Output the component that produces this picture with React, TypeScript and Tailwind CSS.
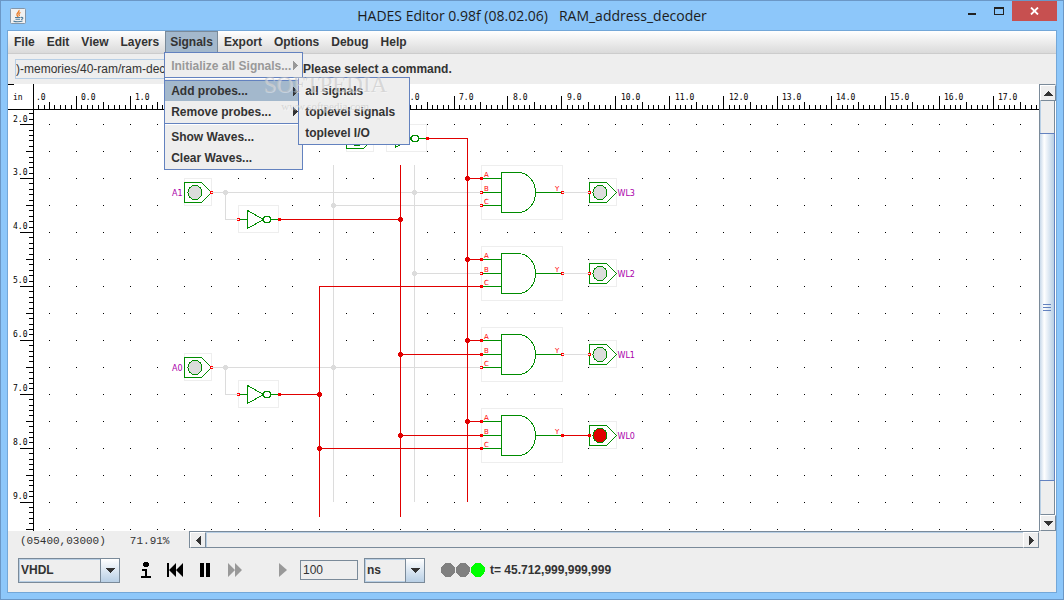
import { ReactNode, useLayoutEffect, useRef, useState } from "react";

const GREEN = "#008c00";
const HIGH = "#e00000";
const LOW = "#dcdcdc";
const PIN = "#ff0000";

// one ruler unit at 71.91% zoom
const UNIT = 53.93;
const ORIGIN_X = 76.4;
const ORIGIN_Y = 16.7;

const menus = ["File", "Edit", "View", "Layers", "Signals", "Export", "Options", "Debug", "Help"];

function range(from: number, to: number) {
  return Array.from({ length: to - from + 1 }, (_, i) => from + i);
}

interface SizeProps {
  width: number;
  height: number;
}

function Ruler({ width, height }: SizeProps) {
  // last unit whose label still fits completely
  const lastX = Math.floor((width + 8 - 25 - ORIGIN_X) / UNIT);
  const lastY = Math.floor((height + 84 - ORIGIN_Y) / UNIT);
  return (
    <g>
      <rect x={8} y={84} width={width} height={25} fill="#fff" />
      <rect x={8} y={84} width={25} height={height} fill="#fff" />
      {range(-7, lastX * 10 + 12).map((i) => {
        const x = Math.round(ORIGIN_X - 0.4 + (i * UNIT) / 10);
        const top = i % 10 === 0 ? 96 : i % 5 === 0 ? 102 : 105;
        return <rect key={i} x={x} y={top} width={1} height={109 - top} />;
      })}
      <text x={36} y={100}>.0</text>
      {range(0, lastX).map((i) => (
        <text key={i} x={Math.round(ORIGIN_X + i * UNIT) + 5} y={100}>
          {i + ".0"}
        </text>
      ))}
      {range(18, lastY * 10 + 12).map((i) => {
        const y = Math.round(ORIGIN_Y - 0.4 + (i * UNIT) / 10);
        const left = i % 10 === 0 ? 20 : i % 5 === 0 ? 26 : 29;
        return <rect key={i} x={left} y={y} width={33 - left} height={1} />;
      })}
      {range(2, lastY).map((i) => (
        <text key={i} x={13} y={Math.round(ORIGIN_Y + i * UNIT) - 3}>
          {i + ".0"}
        </text>
      ))}
      <rect x={8} y={84} width={6} height={1} />
      <rect x={8} y={109} width={width} height={1} />
      <rect x={33} y={84} width={1} height={height} />
      <text x={13} y={100}>in</text>
    </g>
  );
}

function GridDots({ width, height }: SizeProps) {
  const rows = Math.ceil(((height + 84) * 2) / UNIT);
  const cols = Math.ceil((width * 2) / UNIT);
  return (
    <g>
      {range(4, rows).map((row) =>
        range(-1, cols).map((col) => (
          <rect
            key={row + ":" + col}
            x={Math.round(ORIGIN_X - 0.4 + (col * UNIT) / 2)}
            y={Math.round(ORIGIN_Y - 0.4 + (row * UNIT) / 2)}
            width={1}
            height={1}
          />
        ))
      )}
    </g>
  );
}

function Pin({ x, y, on }: { x: number; y: number; on?: boolean }) {
  return <rect x={x - 1} y={y - 1} width={2} height={2} fill={on ? PIN : "#fff"} stroke={PIN} />;
}

function Frame({ x, y, w, h }: { x: number; y: number; w: number; h: number }) {
  return <rect x={x} y={y} width={w} height={h} fill="#fff" stroke="#eeeeee" />;
}

interface PortProps {
  x: number;
  y: number;
  label: string;
  output?: boolean;
  on?: boolean;
}

function Port({ x, y, label, output, on }: PortProps) {
  return (
    <g>
      <Frame x={x} y={y - 14} w={27} h={27} />
      <path
        d={`M${x} ${y - 10}H${x + 17}L${x + 27} ${y}L${x + 17} ${y + 10}H${x}Z`}
        fill="none"
        stroke={GREEN}
      />
      <circle cx={x + 10.5} cy={y} r={7} fill={on ? HIGH : LOW} stroke={GREEN} />
      <Pin x={output ? x : x + 27} y={y} on={on} />
      <text x={output ? x + 28 : x - 2} y={y + 3} fill="#aa00aa" textAnchor={output ? "start" : "end"}>
        {label}
      </text>
    </g>
  );
}

function Inverter({ x, y }: { x: number; y: number }) {
  return (
    <g>
      <Frame x={x} y={y - 14} w={40} h={27} />
      <path
        d={`M${x} ${y}H${x + 9}M${x + 9} ${y - 9}V${y + 9}L${x + 25} ${y}ZM${x + 32} ${y}H${x + 40}`}
        fill="none"
        stroke={GREEN}
      />
      <circle cx={x + 28.5} cy={y} r={3.5} fill="#fff" stroke={GREEN} />
      <Pin x={x} y={y} />
      <Pin x={x + 40.5} y={y} on />
    </g>
  );
}

interface GateProps {
  y: number;
  inputs: boolean[];
  on?: boolean;
}

function AndGate({ y, inputs, on }: GateProps) {
  const rows = [y - 14, y, y + 13];
  return (
    <g>
      <Frame x={481.5} y={y - 27} w={81} h={54} />
      <path
        d={`M501.5 ${y - 20}H518C529 ${y - 20} 535.5 ${y - 10} 535.5 ${y}S529 ${y + 20} 518 ${y + 20}H501.5ZM535.5 ${y}H561`}
        fill="none"
        stroke={GREEN}
      />
      {rows.map((row, i) => (
        <g key={i}>
          <path d={`M482 ${row}H501`} stroke={GREEN} />
          <Pin x={481.5} y={row} on={inputs[i]} />
          <text x={484} y={row - 2} fill={PIN} fontSize={7}>
            {"ABC"[i]}
          </text>
        </g>
      ))}
      <Pin x={562.5} y={y} on={on} />
      <text x={555} y={y - 2} fill={PIN} fontSize={7}>Y</text>
    </g>
  );
}

const lowWires = [
  "M212 192.5H481",
  "M225.5 192.5V219.5H238",
  "M333.5 165V502",
  "M414.5 165V502",
  "M333 205.5H481",
  "M414 273.5H481",
  "M212 367.5H481",
  "M225.5 367.5V394.5H238",
  "M563 192.5H589",
  "M563 273.5H589",
  "M563 354.5H589",
];

const highWires = [
  "M428 138.5H467.5V502",
  "M279 219.5H400",
  "M400.5 165V517",
  "M481 286.5H319.5V517",
  "M279 394.5H319",
  "M400 354.5H481",
  "M400 435.5H481",
  "M319 448.5H481",
  "M467 178.5H481",
  "M467 259.5H481",
  "M467 340.5H481",
  "M467 421.5H481",
  "M563 435.5H589",
];

const lowNodes = [[225, 192], [414, 192], [333, 205], [414, 273], [225, 367], [333, 367]];
const highNodes = [
  [467, 178], [467, 259], [467, 340], [467, 421],
  [400, 219], [400, 354], [400, 435], [319, 394], [319, 448],
];

function Node({ x, y, color }: { x: number; y: number; color: string }) {
  return <path d={`M${x - 1} ${y - 2}h3v1h1v3h-1v1h-3v-1h-1v-3h1z`} fill={color} />;
}

function Schematic() {
  const ref = useRef<SVGSVGElement>(null);
  const [size, setSize] = useState({ width: 0, height: 0 });

  useLayoutEffect(() => {
    const measure = () => {
      const box = ref.current!.getBoundingClientRect();
      setSize({ width: box.width, height: box.height });
    };
    measure();
    window.addEventListener("resize", measure);
    return () => window.removeEventListener("resize", measure);
  }, []);

  return (
    <svg
      ref={ref}
      className="block min-w-0 flex-1 bg-white font-['DejaVu_Sans_Mono',monospace] text-[8px] font-normal"
      shapeRendering="crispEdges"
      role="img"
      aria-label="RAM_address_decoder"
    >
      <g transform="translate(-8 -84)">
        <GridDots {...size} />
        <g className="font-['DejaVu_Sans',sans-serif]">
          <Port x={184.5} y={192.5} label="A1" />
          <Port x={184.5} y={367.5} label="A0" />
          <Port x={346.5} y={138.5} label="" />
          <Inverter x={238.5} y={219.5} />
          <Inverter x={238.5} y={394.5} />
          <Inverter x={386.5} y={138.5} />
          <AndGate y={192.5} inputs={[true, false, false]} />
          <AndGate y={273.5} inputs={[true, false, true]} />
          <AndGate y={354.5} inputs={[true, true, false]} />
          <AndGate y={435.5} inputs={[true, true, true]} on />
          <Port x={589.5} y={192.5} label="WL3" output />
          <Port x={589.5} y={273.5} label="WL2" output />
          <Port x={589.5} y={354.5} label="WL1" output />
          <Port x={589.5} y={435.5} label="WL0" output on />
        </g>
        <path d={lowWires.join("")} fill="none" stroke={LOW} />
        {lowNodes.map(([x, y]) => <Node key={x + ":" + y} x={x} y={y} color={LOW} />)}
        <path d={highWires.join("")} fill="none" stroke={HIGH} />
        {highNodes.map(([x, y]) => <Node key={x + ":" + y} x={x} y={y} color={HIGH} />)}
        {size.width > 0 && <Ruler {...size} />}
      </g>
    </svg>
  );
}

interface MenuItemProps {
  children: ReactNode;
  arrow?: boolean;
  active?: boolean;
  disabled?: boolean;
}

function MenuItem({ children, arrow, active, disabled }: MenuItemProps) {
  return (
    <button
      disabled={disabled}
      className={
        "flex h-[21px] w-full items-center justify-between pr-1 pl-1.5 text-left whitespace-nowrap " +
        (active ? "border-t border-[#6382bf] bg-[#a3b8cc] " : "") +
        (disabled ? "text-[#999]" : "")
      }
    >
      {children}
      {arrow && (
        <svg width="5" height="9" viewBox="0 0 5 9" shapeRendering="crispEdges" className="shrink-0">
          <path d="M0 0L5 4.500L0 9Z" fill="currentColor" />
        </svg>
      )}
    </button>
  );
}

function Separator() {
  return <div className="my-px h-0.5 border-t border-[#6382bf] bg-white" />;
}

function SignalsMenu() {
  return (
    <div className="absolute top-[21px] -left-px z-10 w-[139px] border border-[#6382bf] bg-[#eee] pt-0.5 pb-px">
      <MenuItem arrow disabled>Initialize all Signals...</MenuItem>
      <Separator />
      <div className="relative">
        <MenuItem arrow active>Add probes...</MenuItem>
        <div className="absolute -top-[3px] left-[133px] w-28 border border-[#6382bf] bg-[#eee] pt-0.5 pb-px">
          <MenuItem>all signals</MenuItem>
          <MenuItem>toplevel signals</MenuItem>
          <MenuItem>toplevel I/O</MenuItem>
        </div>
        <div
          aria-hidden="true"
          className="pointer-events-none absolute -top-2 left-24 w-32 text-center font-['Liberation_Serif',serif] font-normal whitespace-nowrap text-[#c4c4c4]/60 [text-shadow:1px_1px_0_rgba(255,255,255,0.4)]"
        >
          <div className="text-[23px] leading-[26px]">SOFTPEDIA</div>
          <div className="text-[11px] leading-4">www.softpedia.com</div>
        </div>
      </div>
      <MenuItem arrow>Remove probes...</MenuItem>
      <Separator />
      <MenuItem>Show Waves...</MenuItem>
      <MenuItem>Clear Waves...</MenuItem>
    </div>
  );
}

function MenuBar() {
  return (
    <nav className="flex h-[23px] border-b border-[#ccc] bg-linear-to-b from-white to-[#dadada]">
      {menus.map((name) => (
        <div key={name} className="relative h-[21px]">
          <button
            className={
              "h-full " +
              (name === "Signals" ? "border-x border-t border-[#7a8a99] bg-[#a3b8cc] px-1" : "px-1.5")
            }
          >
            {name}
          </button>
          {name === "Signals" && <SignalsMenu />}
        </div>
      ))}
    </nav>
  );
}

function JavaIcon() {
  return (
    <svg width="16" height="16" viewBox="0 0 16 16">
      <rect x="0.5" y="0.5" width="15" height="15" rx="1" fill="#f1f1f1" stroke="#8496a8" />
      <path d="M9 2C10 4 6 5 7 7C7 8 8 8 8 9M10.500 4.500C8.500 5.500 8.500 6 9.500 8" fill="none" stroke="#e8761e" strokeWidth="1.200" />
      <path d="M5 9.500H10.500M5.500 11.300H10M3.500 13C5 14 10.500 14 12.500 13M11 9.500C13.500 9 13.500 11 11 11.500" fill="none" stroke="#4f7d9c" strokeWidth="1.100" />
    </svg>
  );
}

function TitleBar() {
  return (
    <header className="relative flex h-[29px] items-center justify-center font-['Open_Sans',sans-serif] text-sm font-normal text-[#1c1c1c]">
      <span className="absolute left-[3px]"><JavaIcon /></span>
      <h1 className="whitespace-pre">HADES Editor 0.98f (08.02.06)   RAM_address_decoder</h1>
      <div className="absolute top-0 right-0 flex h-5">
        <button aria-label="Minimize" className="flex w-7 justify-center pt-3">
          <span className="h-0.5 w-2 bg-[#222]" />
        </button>
        <button aria-label="Maximize" className="flex w-[26px] justify-center pt-1.5">
          <span className="h-2 w-2.5 border border-t-2 border-[#222]" />
        </button>
        <button aria-label="Close" className="flex w-[45px] items-center justify-center bg-[#c75050]">
          <svg width="9" height="8" viewBox="0 0 9 8">
            <path d="M1 0.500L8 7.500M8 0.500L1 7.500" stroke="#fff" strokeWidth="1.800" />
          </svg>
        </button>
      </div>
    </header>
  );
}

const arrows = {
  up: "M0 5L4.500 0L9 5Z",
  down: "M0 0H9L4.500 5Z",
  left: "M5 0V9L0 4.500Z",
  right: "M0 0L5 4.500L0 9Z",
};

function ScrollButton({ dir }: { dir: "up" | "down" | "left" | "right" }) {
  const vertical = dir === "up" || dir === "down";
  return (
    <button
      aria-label={"Scroll " + dir}
      className="flex size-4 shrink-0 items-center justify-center border border-t-white border-r-[#7a8a99] border-b-[#7a8a99] border-l-white"
    >
      <svg width={vertical ? 9 : 5} height={vertical ? 5 : 9} shapeRendering="crispEdges">
        <path d={arrows[dir]} fill="#333" />
      </svg>
    </button>
  );
}

function VerticalScrollbar() {
  return (
    <div className="flex w-[17px] flex-col border-t border-r border-l border-t-[#7a8a99] border-r-white border-l-[#7a8a99]">
      <ScrollButton dir="up" />
      <div className="flex-[32] border-r border-l border-r-[#7a8a99] border-l-[#b8cfe5]" />
      <div className="flex flex-[350] flex-col items-center justify-center gap-0.5 border-y border-r border-[#6382bf] bg-linear-to-r from-[#c8d9ea] via-white via-30% to-[#b8cfe5]">
        <span className="h-px w-2 bg-[#6382bf]" />
        <span className="h-px w-2 bg-[#6382bf]" />
        <span className="h-px w-2 bg-[#6382bf]" />
      </div>
      <div className="flex-[33] border-r border-b border-l border-r-[#7a8a99] border-b-[#7a8a99] border-l-[#b8cfe5]" />
      <ScrollButton dir="down" />
    </div>
  );
}

function StatusRow() {
  return (
    <div className="flex h-[17px] pr-[17px]">
      <div className="flex w-[181px] items-center gap-6 pt-1 pl-3 font-['Liberation_Mono',monospace] text-[11px] font-normal">
        <span>(05400,03000)</span>
        <span>71.91%</span>
      </div>
      <div className="flex h-[17px] flex-1 border-y border-l border-[#7a8a99]">
        <ScrollButton dir="left" />
        <div className="flex-1 border-t border-l border-[#b8cfe5]" />
        <ScrollButton dir="right" />
      </div>
    </div>
  );
}

interface ComboProps {
  label: string;
  options: string[];
  className: string;
}

function Combo({ label, options, className }: ComboProps) {
  return (
    <div className={"relative h-[25px] " + className}>
      <select
        aria-label={label}
        className="h-full w-full appearance-none border border-[#7a8a99] pl-0.5 outline -outline-offset-2 outline-[#b8cfe5]"
      >
        {options.map((o) => <option key={o}>{o}</option>)}
      </select>
      <span className="pointer-events-none absolute inset-y-0 right-0 flex w-5 items-center justify-center border border-[#7a8a99] bg-linear-to-b from-white to-[#b8cfe5]">
        <svg width="10" height="5" shapeRendering="crispEdges">
          <path d="M0 0H10L5 5Z" fill="#333" />
        </svg>
      </span>
    </div>
  );
}

function SimulationBar() {
  const [step, setStep] = useState("100");
  return (
    <footer className="flex h-11 items-center pl-2.5">
      <Combo label="Model" options={["VHDL", "Verilog"]} className="w-[102px]" />
      <div className="flex items-center pl-3 text-black">
        <button aria-label="Info" className="w-[27px]">
          <svg width="10" height="16" viewBox="0 0 10 16" shapeRendering="crispEdges" className="mx-auto">
            <path d="M3 0H7V1H8V4H7V5H3V4H2V1H3ZM1 7H6V14H10V16H0V14H4V9H1Z" />
          </svg>
        </button>
        <button aria-label="Rewind" className="w-8">
          <svg width="16" height="14" viewBox="0 0 16 14" className="mx-auto">
            <path d="M0 0H2V14H0ZM9 0V14L2 7ZM16 0V14L9 7Z" />
          </svg>
        </button>
        <button aria-label="Pause" className="w-7">
          <svg width="10" height="14" viewBox="0 0 10 14" className="mx-auto">
            <path d="M0 0H4V14H0ZM6 0H10V14H6Z" />
          </svg>
        </button>
        <button aria-label="Run" disabled className="w-8 text-[#999]">
          <svg width="14" height="14" viewBox="0 0 14 14" fill="currentColor" className="mx-auto">
            <path d="M0 0L7 7L0 14ZM7 0L14 7L7 14Z" />
          </svg>
        </button>
        <button aria-label="Step" disabled className="ml-6 w-4 text-[#999]">
          <svg width="8" height="14" viewBox="0 0 8 14" fill="currentColor" className="mx-auto">
            <path d="M0 0L8 7L0 14Z" />
          </svg>
        </button>
      </div>
      <input
        aria-label="Step time"
        value={step}
        onChange={(e) => setStep(e.target.value)}
        className="ml-[9px] h-5 w-[58px] border border-[#7a8a99] px-0.5 font-normal"
      />
      <Combo label="Time unit" options={["ns", "ps", "us", "ms"]} className="ml-1.5 w-[61px]" />
      <svg width="45" height="14" className="ml-4" shapeRendering="crispEdges">
        <circle cx="7" cy="7" r="7" fill="#808080" />
        <circle cx="22" cy="7" r="7" fill="#808080" />
        <circle cx="37" cy="7" r="7" fill="#00ff00" />
      </svg>
      <output className="ml-1">t= 45.712,999,999,999</output>
    </footer>
  );
}

export default function App() {
  const [path, setPath] = useState(")-memories/40-ram/ram-decoder.hds");
  return (
    <div className="flex min-h-screen flex-col border border-[#6b97c6] bg-[#8dc7fa] px-1.5 pb-1.5 font-['Liberation_Sans',sans-serif] text-xs font-bold text-[#333]">
      <TitleBar />
      <main className="flex flex-1 flex-col border border-[#73a7d8] bg-[#eee]">
        <MenuBar />
        <div className="flex h-[30px] items-center gap-2 pl-[7px]">
          <input
            aria-label="Design"
            value={path}
            onChange={(e) => setPath(e.target.value)}
            className="h-5 w-[280px] border border-[#b8cfe5] font-normal"
          />
          <span>Please select a command.</span>
        </div>
        <div className="flex flex-1">
          <Schematic />
          <VerticalScrollbar />
        </div>
        <StatusRow />
        <SimulationBar />
      </main>
    </div>
  );
}
